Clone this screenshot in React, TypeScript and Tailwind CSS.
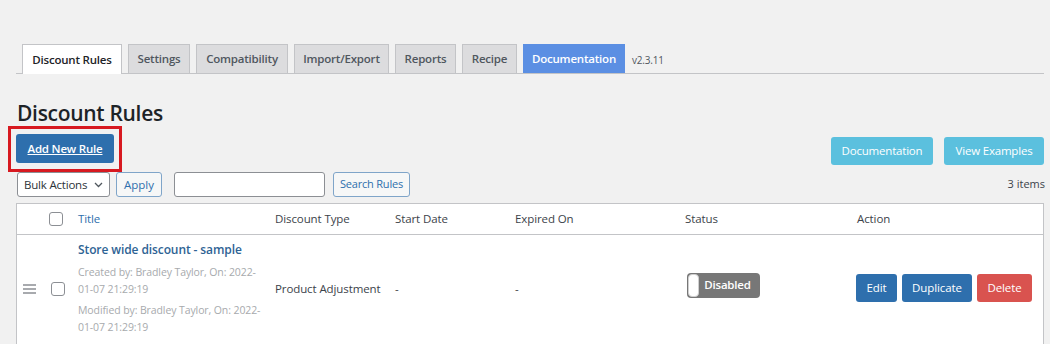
import React from "react";

const font = { fontFamily: '"Open Sans", "Noto Sans", sans-serif' };

function Tab({ label, w, active, doc }: { label: string; w: string; active?: boolean; doc?: boolean }) {
  let cls =
    "h-[29px] flex items-center justify-center whitespace-nowrap text-[11.5px] tracking-[-0.2px] font-semibold border border-b-0 leading-none " +
    w;
  if (active) cls += " bg-white text-[#1d2327] border-[#c3c4c7] h-[30px] -mb-px";
  else if (doc) cls += " bg-[#5b8fe3] text-white border-[#5b8fe3]";
  else cls += " bg-[#dcdcde] text-[#50575e] border-[#c3c4c7]";
  return <div className={cls}>{label}</div>;
}

function Checkbox() {
  return <div className="w-[14px] h-[14px] rounded-[3px] border border-[#8c8f94] bg-white" />;
}

export default function App() {
  return (
    <div className="w-[1050px] h-[344px] overflow-hidden bg-[#f1f1f1] text-[#3c434a]" style={font}>
      <div className="pl-[16px] pr-[6px]">
        {/* Tabs */}
        <div className="mt-[44px] flex items-end gap-[6px] border-b border-[#c3c4c7] pl-[6px]">
          <Tab label="Discount Rules" w="w-[100px]" active />
          <Tab label="Settings" w="w-[62px]" />
          <Tab label="Compatibility" w="w-[92px]" />
          <Tab label="Import/Export" w="w-[95px]" />
          <Tab label="Reports" w="w-[61px]" />
          <Tab label="Recipe" w="w-[55px]" />
          <Tab label="Documentation" w="w-[102px]" doc />
          <div className="text-[10px] tracking-[-0.2px] text-[#50575e] pb-[5px] ml-[1px]">v2.3.11</div>
        </div>

        {/* Heading */}
        <h1 className="mt-[27px] text-[21px] font-semibold tracking-[-0.3px] text-[#1d2327] leading-[24px] ml-[1px]">
          Discount Rules
        </h1>

        {/* Buttons row */}
        <div className="mt-[9px] flex items-start justify-between">
          <div className="relative">
            <div className="absolute -left-[8px] -top-[8px] w-[114px] h-[46px] border-[3px] border-[#d71920]" />
            <div className="h-[29px] w-[98px] rounded-[3px] bg-[#2e6fad] text-white text-[11.5px] tracking-[-0.2px] font-semibold flex items-center justify-center underline">
              Add New Rule
            </div>
          </div>
          <div className="flex gap-[11px] mt-[3px]">
            <div className="h-[28px] w-[102px] rounded-[3px] bg-[#5bc0de] text-white text-[11.5px] tracking-[-0.2px] flex items-center justify-center">
              Documentation
            </div>
            <div className="h-[28px] w-[100px] rounded-[3px] bg-[#5bc0de] text-white text-[11.5px] tracking-[-0.2px] flex items-center justify-center">
              View Examples
            </div>
          </div>
        </div>

        {/* Filters row */}
        <div className="mt-[7px] flex items-center">
          <div className="ml-[1px] h-[25px] w-[93px] bg-white border border-[#8c8f94] rounded-[3px] flex items-center pl-[6px] pr-[6px] text-[11.5px] tracking-[-0.2px] text-[#2c3338] justify-between whitespace-nowrap">
            <span>Bulk Actions</span>
            <svg width="9" height="6" viewBox="0 0 9 6" fill="none" stroke="#50575e" strokeWidth="1.3">
              <path d="M1 1l3.5 3.5L8 1" />
            </svg>
          </div>
          <div className="ml-[6px] h-[25px] w-[46px] bg-[#f6f7f7] border border-[#7fa5c9] rounded-[3px] flex items-center justify-center text-[11.5px] text-[#2e6fad]">
            Apply
          </div>
          <div className="ml-[12px] h-[25px] w-[151px] bg-white border border-[#8c8f94] rounded-[3px]" />
          <div className="ml-[8px] h-[25px] w-[77px] bg-[#f6f7f7] border border-[#7fa5c9] rounded-[3px] flex items-center justify-center text-[11px] tracking-[-0.2px] text-[#2e6fad] whitespace-nowrap">
            Search Rules
          </div>
          <div className="ml-auto text-[11px] text-[#3c434a] -mr-[1px]">3 items</div>
        </div>

        {/* Table */}
        <div className="mt-[6px] w-[1028px] bg-white border border-[#c3c4c7]">
          <div className="grid grid-cols-[61px_197px_120px_120px_170px_172px_1fr] h-[31px] items-center border-b border-[#c3c4c7] text-[11.5px] tracking-[-0.1px] text-[#3c434a]">
            <div className="flex justify-end pr-[15px]">
              <Checkbox />
            </div>
            <div className="text-[#2e6fad]">Title</div>
            <div>Discount Type</div>
            <div>Start Date</div>
            <div>Expired On</div>
            <div>Status</div>
            <div>Action</div>
          </div>
          <div className="grid grid-cols-[61px_197px_120px_120px_170px_172px_1fr] items-center text-[11.5px] tracking-[-0.1px] text-[#3c434a]">
            <div className="flex items-center pl-[6px] gap-[15px]">
              <svg width="13" height="10" viewBox="0 0 13 10" stroke="#8c8f94" strokeWidth="1.3">
                <path d="M0 1h13M0 5h13M0 9h13" />
              </svg>
              <Checkbox />
            </div>
            <div className="pt-[6px] pb-[6px]">
              <div className="text-[12px] tracking-[-0.1px] font-semibold text-[#2e6394] leading-[18px]">
                Store wide discount - sample
              </div>
              <div className="mt-[5px] text-[10.5px] tracking-[-0.1px] text-[#a7aaad] leading-[17px]">
                Created by: Bradley Taylor, On: 2022-
                <br />
                01-07 21:29:19
              </div>
              <div className="mt-[4px] text-[10.5px] tracking-[-0.1px] text-[#a7aaad] leading-[17px]">
                Modified by: Bradley Taylor, On: 2022-
                <br />
                01-07 21:29:19
              </div>
            </div>
            <div>Product Adjustment</div>
            <div>-</div>
            <div>-</div>
            <div className="pl-[2px]">
              <div className="h-[25px] w-[73px] rounded-[4px] bg-[#777777] flex items-center -mt-[7px] p-[1px]">
                <div className="h-[23px] w-[11px] rounded-[4px] bg-white border border-[#cfcfcf]" />
                <div className="flex-1 text-center text-white text-[11.5px] tracking-[-0.2px] font-semibold pr-[3px]">Disabled</div>
              </div>
            </div>
            <div className="flex gap-[5px] -ml-[1px] -mt-[2px]">
              <div className="h-[28px] w-[41px] rounded-[3px] bg-[#2e6fad] text-white text-[11.5px] flex items-center justify-center">
                Edit
              </div>
              <div className="h-[28px] w-[70px] rounded-[3px] bg-[#2e6fad] text-white text-[11.5px] flex items-center justify-center">
                Duplicate
              </div>
              <div className="h-[28px] w-[55px] rounded-[3px] bg-[#d9534f] text-white text-[11.5px] flex items-center justify-center">
                Delete
              </div>
            </div>
          </div>
          <div className="h-[20px]" />
        </div>
      </div>
    </div>
  );
}
